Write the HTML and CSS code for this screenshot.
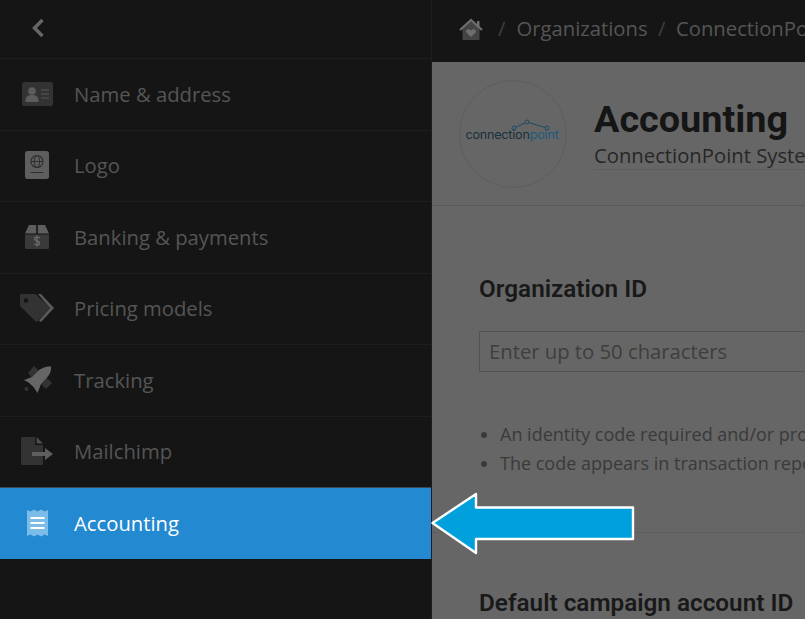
FILE: index.html
```html
<!DOCTYPE html>
<html lang="en">
<head>
<meta charset="utf-8">
<title>Accounting</title>
<link rel="stylesheet" href="styles.css">
</head>
<body>
<div class="app">
  <nav class="sidebar">
    <div class="back">
      <svg class="chev" width="14" height="20" viewBox="0 0 14 20"><path d="M11.500 2 3.500 10l8 8" fill="none" stroke="#666" stroke-width="3.400"/></svg>
    </div>
    <a class="item">
      <span class="ico"><svg width="31" height="24" viewBox="0 0 31 24"><rect width="31" height="24" rx="2.500" fill="#333"/><circle cx="10" cy="9" r="3.800" fill="#5c5c5c"/><path d="M3.500 19c0-5 2.500-6 6.500-6s6.500 1 6.500 6c0 .6-.4 1-1 1h-11c-.6 0-1-.4-1-1z" fill="#5c5c5c"/><path d="M19 8h8M19 12h8M19 16h8" stroke="#4c4c4c" stroke-width="1.300"/></svg></span>
      <span>Name &amp; address</span>
    </a>
    <a class="item">
      <span class="ico"><svg width="24" height="28" viewBox="0 0 24 28"><rect width="24" height="28" rx="2.500" fill="#5e5e5e"/><circle cx="12" cy="10.500" r="6" fill="none" stroke="#2e2e2e" stroke-width="1.100"/><ellipse cx="12" cy="10.500" rx="2.600" ry="6" fill="none" stroke="#2e2e2e" stroke-width="1"/><path d="M6 10.500h12M5.500 21.500h13" stroke="#2e2e2e" stroke-width="1.200"/></svg></span>
      <span>Logo</span>
    </a>
    <a class="item">
      <span class="ico"><svg width="24" height="24" viewBox="0 0 24 24"><path d="M4 0h7.200v8.500H0z" fill="#5e5e5e"/><path d="M12.800 0H20l4 8.500H12.800z" fill="#5e5e5e"/><path d="M0 9.500h24v13a1.500 1.500 0 0 1-1.500 1.500h-21A1.500 1.500 0 0 1 0 22.500z" fill="#3a3a3a"/><path d="M14.800 13.200c-.5-.7-1.500-1-2.800-1-1.500 0-2.500.7-2.500 1.800 0 2.600 5.200 1.400 5.200 4 0 1.200-1.100 1.900-2.700 1.900-1.200 0-2.300-.4-2.900-1.200M12 10.500v11" fill="none" stroke="#6a6a6a" stroke-width="1.300"/></svg></span>
      <span>Banking &amp; payments</span>
    </a>
    <a class="item">
      <span class="ico"><svg width="34" height="28" viewBox="0 0 34 28"><path d="M18 0h3l13 14-13 14-2-1.500L30 14z" fill="#5a5a5a"/><path d="M1.500 0H14c1 0 2 .4 2.500 1L29 12.500c.8.800.8 2 0 2.800L18 27c-.8.800-2 .800-2.800 0L1 13c-.6-.6-1-1.400-1-2.200V1.500C0 .7.700 0 1.500 0z" fill="#333"/><circle cx="6" cy="6.500" r="2.200" fill="#151515"/></svg></span>
      <span>Pricing models</span>
    </a>
    <a class="item">
      <span class="ico"><svg class="ico-shift" width="30" height="28" viewBox="0 0 30 28"><path d="M5 7l6-7 6 6-7 7zM17 17l6-6 6 6-6 6z" fill="#333"/><circle cx="3.500" cy="23" r="2" fill="#333"/><path d="M28 .5c.5 4-1 8-4 11l-6 6.500-3.500 9-4-6-5-4.500-4.500-2.500L9 11l6-6c3-3 9-5 13-4.500z" fill="#666"/></svg></span>
      <span>Tracking</span>
    </a>
    <a class="item">
      <span class="ico"><svg width="32" height="28" viewBox="0 0 32 28"><path d="M0 1.500A1.500 1.500 0 0 1 1.500 0H14v8h8v18.500a1.500 1.500 0 0 1-1.500 1.500h-19A1.500 1.500 0 0 1 0 26.500z" fill="#333"/><path d="M15.500 0 22 6.500h-6.500z" fill="#4c4c4c"/><path d="M11 17h15" stroke="#5e5e5e" stroke-width="4"/><path d="M24 11l8 6-8 6z" fill="#5e5e5e"/></svg></span>
      <span>Mailchimp</span>
    </a>
    <a class="item active">
      <span class="ico"><svg width="21" height="28" viewBox="0 0 21 28"><path d="M0 1 3.500 2.500 7 .6 10.500 2.500 14 .6 17.500 2.500 21 1V27L17.500 25.500 14 27.400 10.500 25.500 7 27.400 3.500 25.500 0 27z" fill="#7cbce9"/><path d="M3.500 9h14M3.500 14h14M3.500 19h14" stroke="#fff" stroke-width="2"/></svg></span>
      <span>Accounting</span>
    </a>
  </nav>

  <main class="main">
    <header class="topbar">
      <svg class="home" width="24" height="22" viewBox="0 0 24 22"><path d="M3.500 10.500V21a1 1 0 0 0 1 1h15a1 1 0 0 0 1-1V10.500L12 3z" fill="#444"/><path d="M1 12 12 2l11 10" fill="none" stroke="#6e6e6e" stroke-width="2.200"/><path d="M18 3h2.500v6H18z" fill="#6e6e6e"/><path d="M12 19 7.500 14.500c-1.700-2.200 2-5 4.500-2 2.500-3 6.200-.2 4.500 2z" fill="#6e6e6e"/></svg>
      <span class="crumb-sep first">/</span>
      <span class="crumb">Organizations</span>
      <span class="crumb-sep">/</span>
      <span class="crumb">ConnectionPoint Systems</span>
    </header>

    <section class="pagehead">
      <div class="logo">
        <svg width="106" height="40" viewBox="0 0 106 40"><path d="M54 26 67 20 87 26" fill="none" stroke="#1f4a66" stroke-width="1"/><circle cx="54" cy="26" r="2" fill="#666" stroke="#1f4a66" stroke-width="1"/><circle cx="67" cy="20" r="2" fill="#666" stroke="#1f4a66" stroke-width="1"/><circle cx="87" cy="26" r="2" fill="#666" stroke="#1f4a66" stroke-width="1"/></svg>
        <span class="logo-text">connection<b>point</b></span>
      </div>
      <div class="headtext">
        <h1>Accounting</h1>
        <p class="sub">ConnectionPoint Systems Inc. and all of its related organizations</p>
      </div>
    </section>

    <section class="block first-block">
      <h2>Organization ID</h2>
      <div class="field">Enter up to 50 characters</div>
      <ul>
        <li>An identity code required and/or provided by your accounting system</li>
        <li>The code appears in transaction reports and exports for this organization</li>
      </ul>
    </section>

    <section class="block">
      <h2>Default campaign account ID</h2>
    </section>
  </main>
</div>
<svg class="callout" width="206" height="64" viewBox="0 0 206 64"><path d="M1.500 31 45 2V15.500H202V47H45V61z" fill="#00a0dc" stroke="#fff" stroke-width="2.400" stroke-linejoin="round"/></svg>
</body>
</html>
```
FILE: styles.css
```css
* { box-sizing: border-box; }
html, body { margin: 0; height: 100%; overflow: hidden; }
body { font-family: "Open Sans", "Liberation Sans", sans-serif; background: #666; position: relative; }
.app { display: flex; height: 619px; width: 805px; overflow: hidden; }

.sidebar { width: 432px; flex: none; background: #151515; border-right: 1px solid #1d1d1d; }
.back { height: 58px; display: flex; align-items: center; padding-left: 31px; }
.chev { display: block; margin-top: -3px; }
.item { display: flex; align-items: center; height: 71.5px; padding-bottom: 1px; border-top: 1px solid #1e1e1e; color: #555; font-size: 20.250px; }
.item .ico { width: 74px; flex: none; display: flex; justify-content: center; }
.ico-shift { margin-left: 2px; }
.active { height: 72px; background: #2389d0; color: #fff; border-top-color: #3c4a55; }

.main { width: 373px; flex: none; background: #666; overflow: hidden; }
.topbar { height: 62px; background: #151515; display: flex; align-items: center; color: #555; font-size: 20.250px; white-space: nowrap; padding: 0 0 7px 27px; }
.home { flex: none; margin-top: 2px; }
.crumb-sep { margin: 0 10.500px; color: #3f3f3f; }
.crumb-sep.first { margin: 0 11px 0 15px; }

.pagehead { height: 144px; display: flex; border-bottom: 1px solid #5a5a5a; padding: 18px 0 0 27px; white-space: nowrap; }
.logo { width: 108px; height: 108px; flex: none; border: 1px solid #5e5e5e; border-radius: 50%; display: flex; flex-direction: column; align-items: center; padding-top: 21px; }
.logo svg { display: block; margin-bottom: -16px; flex: none; }
.logo-text { font-family: Inter, sans-serif; font-size: 12.600px; letter-spacing: -.2px; color: #18303f; line-height: 18px; margin-left: -2px; }
.logo-text b { font-weight: 400; color: #1d5a7d; }
.headtext { margin-left: 27px; padding-top: 17px; }
h1 { margin: 0; font: 700 37.800px/45px Roboto, sans-serif; color: #151515; }
.sub { margin: 0; font-size: 20.250px; line-height: 27px; color: #262626; border-bottom: 1px dotted #565656; display: inline-block; }

.block { padding-left: 48px; white-space: nowrap; }
.first-block { height: 327px; padding-top: 66px; border-bottom: 1px solid #5e5e5e; }
h2 { margin: 0 0 0 -1px; font: 600 24.300px/34px Roboto, sans-serif; color: #191919; }
.block:last-child h2 { margin-top: 53px; }
.field { margin-top: 25px; margin-left: -1px; width: 500px; height: 41px; border: 1px solid #535353; color: #3e3e3e; font-size: 20.250px; line-height: 39px; padding-left: 9px; }
ul { margin: 48px 0 0; padding: 0 0 0 20px; font-size: 18px; line-height: 29px; color: #3a3a3a; }
.callout { position: absolute; left: 431px; top: 492px; }
```
